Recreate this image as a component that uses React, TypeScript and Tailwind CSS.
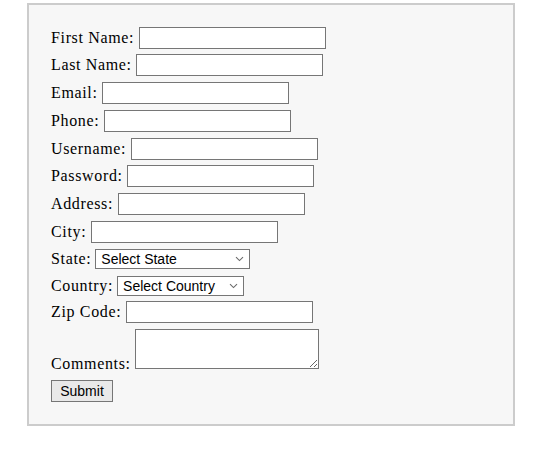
import React from "react";

const serif = { fontFamily: '"Liberation Serif", "Times New Roman", serif' };

function Chevron() {
  return (
    <svg
      className="pointer-events-none absolute right-[6px] top-1/2 -translate-y-1/2"
      width="9"
      height="6"
      viewBox="0 0 9 6"
      fill="none"
    >
      <path d="M1 1.2 L4.5 4.6 L8 1.2" stroke="#6b6b6b" strokeWidth="1.1" />
    </svg>
  );
}

function TextRow({ label, cls, type = "text" }: { label: string; cls: string; type?: string }) {
  return (
    <div className={`flex h-[22px] items-center gap-[4.5px] ${cls}`}>
      <label className="whitespace-nowrap text-[16px] leading-[18px] tracking-[0.65px] text-black">{label}</label>
      <input
        type={type}
        className="h-[22px] w-[187px] border border-[#767676] bg-white px-[2px] text-[13.33px] outline-none"
      />
    </div>
  );
}

function SelectRow({ label, text, w, cls }: { label: string; text: string; w: string; cls: string }) {
  return (
    <div className={`flex h-[22px] items-center gap-[4px] ${cls}`}>
      <label className="whitespace-nowrap text-[16px] leading-[18px] tracking-[0.65px] text-black">{label}</label>
      <div className="relative">
        <select
          className={`h-[20px] ${w} appearance-none border border-[#767676] bg-white pl-[5px] text-[14px] leading-[16px] text-black outline-none`}
          style={{ fontFamily: '"Liberation Sans", Arial, sans-serif' }}
        >
          <option>{text}</option>
        </select>
        <Chevron />
      </div>
    </div>
  );
}

export default function App() {
  return (
    <div className="min-h-[452px] w-[546px] bg-white pt-[3px]" style={serif}>
      <form className="ml-[27px] flex h-[423px] w-[488px] flex-col border-2 border-[#cccccc] bg-[#f7f7f7] p-[22px]">
        <TextRow label="First Name:" cls="mb-[5px]" />
        <TextRow label="Last Name:" cls="mb-[6px]" />
        <TextRow label="Email:" cls="mb-[6px]" type="email" />
        <TextRow label="Phone:" cls="mb-[6px]" />
        <TextRow label="Username:" cls="mb-[5px]" />
        <TextRow label="Password:" cls="mb-[6px]" type="password" />
        <TextRow label="Address:" cls="mb-[6px]" />
        <TextRow label="City:" cls="mb-[5px]" />
        <SelectRow label="State:" text="Select State" w="w-[155px]" cls="mb-[5px]" />
        <SelectRow label="Country:" text="Select Country" w="w-[127px]" cls="mb-[4px]" />
        <TextRow label="Zip Code:" cls="mb-[6px]" />
        <div className="mb-[10px] flex items-end gap-[4.5px]">
          <label className="mb-[-3px] whitespace-nowrap text-[16px] leading-[16px] tracking-[0.65px] text-black">Comments:</label>
          <textarea className="h-[40px] w-[184px] border border-[#767676] bg-white text-[13.33px] outline-none" />
        </div>
        <div>
          <button
            type="button"
            className="h-[22px] w-[62px] border border-[#767676] bg-[#e9e9e9] text-[14px] leading-[16px] text-black"
            style={{ fontFamily: '"Liberation Sans", Arial, sans-serif' }}
          >
            Submit
          </button>
        </div>
      </form>
    </div>
  );
}
